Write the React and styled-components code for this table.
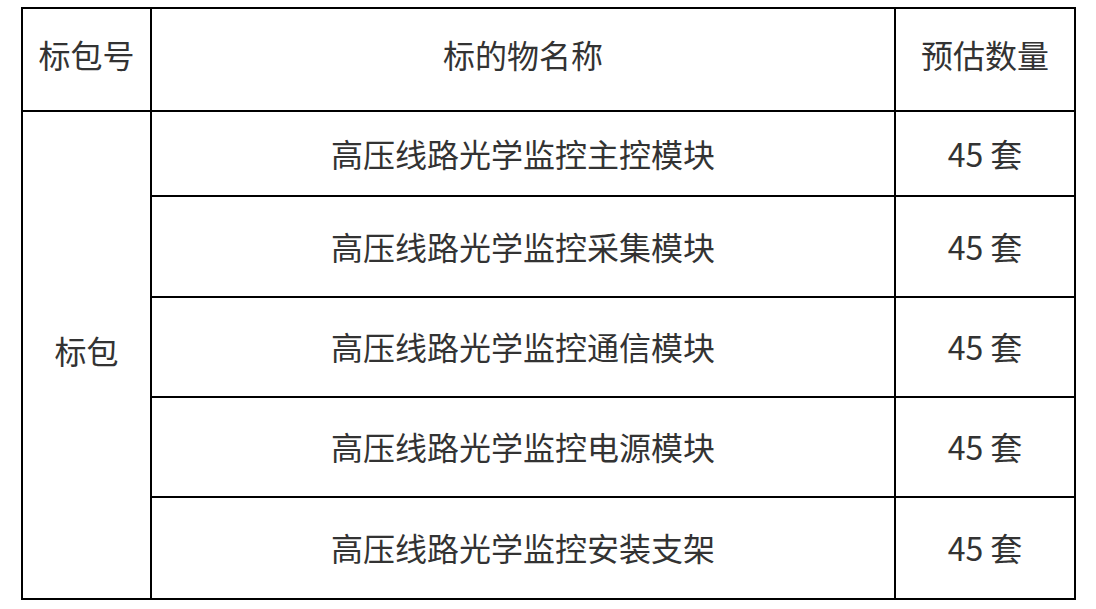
import React from "react";
import styled, { createGlobalStyle } from "styled-components";

const GlobalStyle = createGlobalStyle`
  html, body {
    margin: 0;
    padding: 0;
    background: #fff;
  }
`;

const Page = styled.div`
  padding: 7px 0 0 21px;
  font-family: "Noto Sans CJK SC", "Noto Sans", sans-serif;
`;

const Table = styled.table`
  border-collapse: collapse;
  table-layout: fixed;
  width: 1053px;
  color: #333;
  font-size: 32px;
`;

const Row = styled.tr`
  height: ${(p) => p.$h}px;
`;

const Cell = styled.td`
  border: 2px solid #000;
  text-align: center;
  vertical-align: middle;
  padding: 0 0 ${(p) => p.$lift ?? 2}px;
  font-weight: 400;
  line-height: 1;
`;

const rows = [
  { name: "高压线路光学监控主控模块", h: 85 },
  { name: "高压线路光学监控采集模块", h: 101 },
  { name: "高压线路光学监控通信模块", h: 100 },
  { name: "高压线路光学监控电源模块", h: 100 },
  { name: "高压线路光学监控安装支架", h: 102 },
];

export default function App() {
  return (
    <Page>
      <GlobalStyle />
      <Table>
        <colgroup>
          <col style={{ width: 129 }} />
          <col style={{ width: 744 }} />
          <col style={{ width: 180 }} />
        </colgroup>
        <tbody>
          <Row $h={103}>
            <Cell $lift={12}>标包号</Cell>
            <Cell $lift={12}>标的物名称</Cell>
            <Cell $lift={12}>预估数量</Cell>
          </Row>
          {rows.map((r, i) => (
            <Row key={r.name} $h={r.h}>
              {i === 0 && (
                <Cell rowSpan={rows.length} $lift={10}>
                  标包
                </Cell>
              )}
              <Cell>{r.name}</Cell>
              <Cell>45 套</Cell>
            </Row>
          ))}
        </tbody>
      </Table>
    </Page>
  );
}
